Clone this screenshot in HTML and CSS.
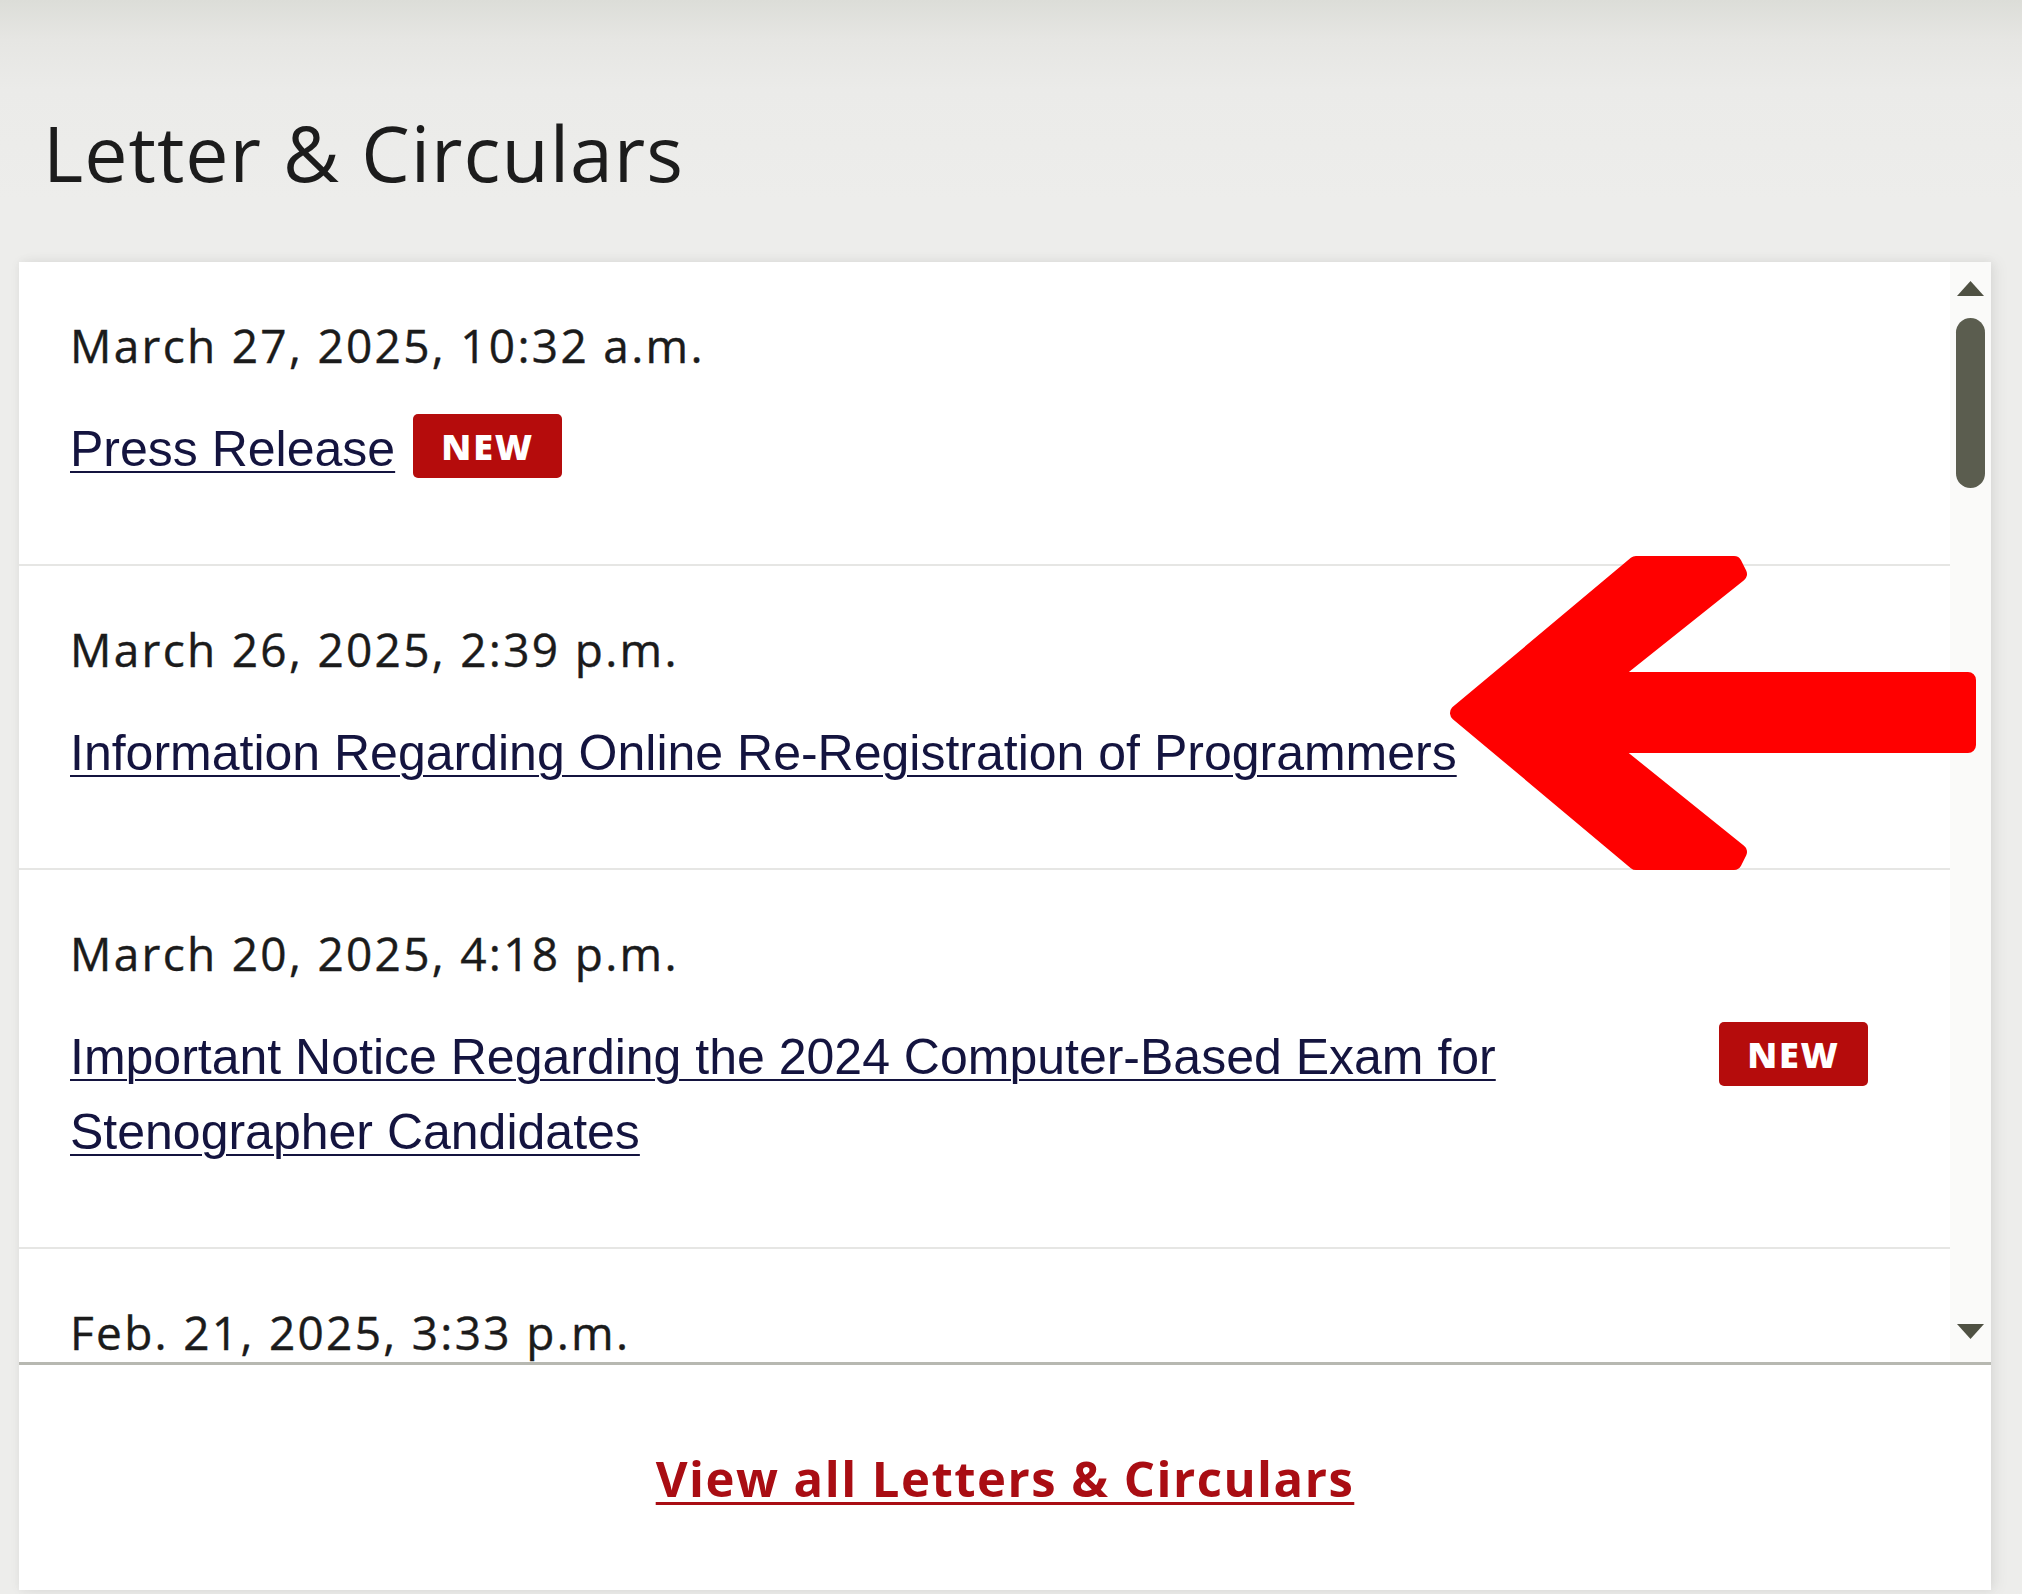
FILE: index.html
```html
<!DOCTYPE html>
<html lang="en">
<head>
<meta charset="utf-8">
<title>Letter &amp; Circulars</title>
<link rel="stylesheet" href="styles.css">
</head>
<body>
<div class="page">
  <h2 class="title">Letter &amp; Circulars</h2>
  <div class="card">
    <div class="list-wrap">
      <div class="list">
        <div class="item">
          <div class="date">March 27, 2025, 10:32 a.m.</div>
          <div class="row">
            <a class="link" href="#">Press Release</a>
            <span class="badge">NEW</span>
          </div>
        </div>
        <div class="item">
          <div class="date">March 26, 2025, 2:39 p.m.</div>
          <div class="row">
            <a class="link" href="#">Information Regarding Online Re-Registration of Programmers</a>
          </div>
        </div>
        <div class="item">
          <div class="date">March 20, 2025, 4:18 p.m.</div>
          <div class="row">
            <a class="link grow" href="#">Important Notice Regarding the 2024 Computer-Based Exam for Stenographer Candidates</a>
            <span class="badge">NEW</span>
          </div>
        </div>
        <div class="item">
          <div class="date">Feb. 21, 2025, 3:33 p.m.</div>
        </div>
      </div>
      <div class="scrollbar">
        <svg class="sb-arrow" viewBox="0 0 29 17"><path d="M14.5 1 L28 16 L1 16 Z" fill="#4f5143"/></svg>
        <div class="thumb"></div>
        <div class="sb-space"></div>
        <svg class="sb-arrow" viewBox="0 0 29 17"><path d="M1 1 L28 1 L14.5 16 Z" fill="#4f5143"/></svg>
      </div>
    </div>
    <div class="footer">
      <a class="view-all" href="#">View all Letters &amp; Circulars</a>
    </div>
  </div>
  <svg class="annot" viewBox="0 0 2022 1594" width="2022" height="1594">
    <path d="M1458,713 L1636,564 L1734,564 L1739,574 L1606,680 L1968,680 L1968,745 L1606,745 L1739,852 L1734,862 L1636,862 Z" fill="#ff0000" stroke="#ff0000" stroke-width="16" stroke-linejoin="round"/>
  </svg>
</div>
</body>
</html>
```
FILE: styles.css
```css
html, body {
  margin: 0;
  padding: 0;
}
body {
  width: 2022px;
  height: 1594px;
  overflow: hidden;
  background: linear-gradient(to bottom, #dcddd8 0px, #e6e6e3 40px, #ebebe9 90px, #ededeb 200px, #ededeb 100%);
  font-family: "Open Sans", "Noto Sans", sans-serif;
}
.page {
  position: relative;
  height: 1594px;
  padding: 0 31px 0 19px;
  box-sizing: border-box;
}
.title {
  margin: 0;
  padding: 114px 0 71px 24px;
  font-family: "Open Sans", sans-serif;
  font-weight: 400;
  font-size: 77px;
  line-height: 77px;
  color: #1c1c1c;
  letter-spacing: 1px;
}
.card {
  background: #ffffff;
  height: 1328px;
  box-shadow: 0 0 10px rgba(0, 0, 0, 0.06), 6px 0 14px rgba(0, 0, 0, 0.05);
  display: flex;
  flex-direction: column;
}
.list-wrap {
  display: flex;
  height: 1100px;
}
.list {
  flex: 1;
  overflow: hidden;
}
.item {
  padding: 53px 82px 77px 51px;
  border-bottom: 2px solid #e6e6e4;
}
.date {
  font-family: "Open Sans", sans-serif;
  font-weight: 500;
  font-size: 46px;
  line-height: 60px;
  color: #1b1b1b;
  letter-spacing: 2.3px;
  -webkit-text-stroke: 0.4px #1b1b1b;
}
.row {
  display: flex;
  align-items: flex-start;
  margin-top: 37px;
}
.link {
  font-family: "Liberation Sans", Arial, sans-serif;
  font-size: 50px;
  line-height: 75px;
  color: #14143f;
  text-decoration: underline;
  text-decoration-thickness: 2px;
  text-underline-offset: 5px;
}
.grow {
  flex: 1;
}
.badge {
  flex-shrink: 0;
  margin: 2px 0 0 18px;
  height: 64px;
  width: 149px;
  box-sizing: border-box;
  display: flex;
  align-items: center;
  justify-content: center;
  background: #b50c0c;
  border-radius: 5px;
  color: #ffffff;
  font-family: "Open Sans", sans-serif;
  font-weight: 800;
  font-size: 36px;
  letter-spacing: 1.8px;
}
.scrollbar {
  width: 41px;
  background: #fafaf9;
  display: flex;
  flex-direction: column;
  align-items: center;
  padding: 18px 0 22px;
  box-sizing: border-box;
}
.sb-arrow {
  width: 29px;
  height: 17px;
  display: block;
  flex-shrink: 0;
}
.thumb {
  margin-top: 21px;
  width: 29px;
  height: 170px;
  border-radius: 15px;
  background: #5b5d4f;
  flex-shrink: 0;
}
.sb-space {
  flex: 1;
}
.footer {
  flex: 1;
  border-top: 3px solid #b7b8b1;
  display: flex;
  align-items: center;
  justify-content: center;
}
.view-all {
  font-family: "Open Sans", sans-serif;
  font-weight: 700;
  font-size: 49px;
  line-height: 60px;
  color: #a90d13;
  letter-spacing: 1.5px;
  text-decoration: underline;
  text-decoration-thickness: 3px;
  text-underline-offset: 5px;
}
.annot {
  position: absolute;
  left: 0;
  top: 0;
  pointer-events: none;
}
```
